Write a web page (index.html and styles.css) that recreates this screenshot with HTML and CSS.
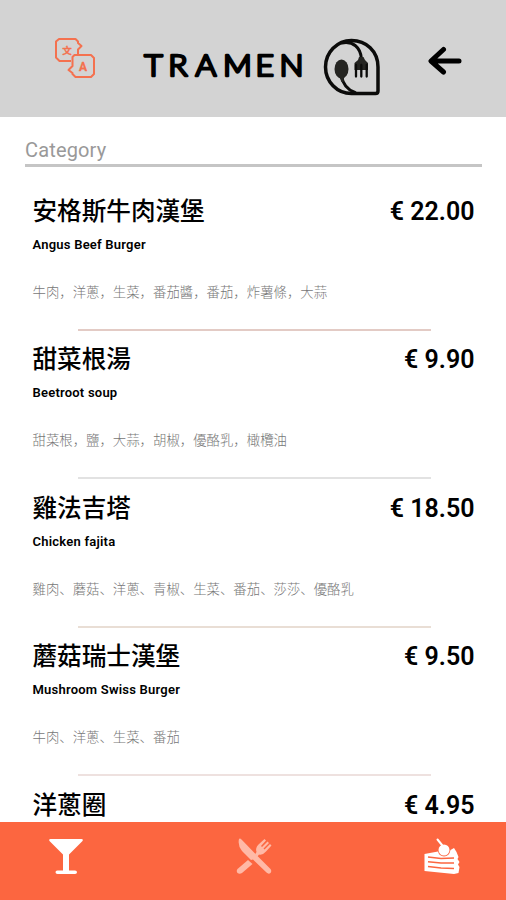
FILE: index.html
```html
<!DOCTYPE html>
<html lang="zh">
<head>
<meta charset="utf-8">
<title>Tramen</title>
<link rel="stylesheet" href="styles.css">
</head>
<body>
<div class="app">
  <header class="header">
    <svg class="translate" viewBox="0 0 42 42" fill="none" stroke="#f4714f" stroke-width="2" stroke-linejoin="round">
      <path d="M17 24H5.500L2 20.500V4.500L5 2H21.500L24 4.500V6L27.500 9L24 12.500V17"/>
      <path d="M20.500 18H37L40 21V37L37 40H21.500L18.500 37V36L14.500 33L18.500 29V20Z"/>
      <text class="glyph-zh" x="13" y="17">文</text>
      <text class="glyph-a" x="29" y="34">A</text>
    </svg>
    <svg class="wordmark" viewBox="0 0 170 40">
      <text transform="scale(1.06 1)" x="5 27.500 53.300 79.200 109.800 132.600" y="30.500">TRAMEN</text>
    </svg>
    <svg class="emblem" viewBox="0 0 58 58" fill="none" stroke="#0b0b0a" stroke-linecap="round" stroke-linejoin="round">
      <path stroke-width="3.500" d="M28.500 2.500C43 2.500 55 13 55 29V53Q55 55.500 52.500 55.500H28.500C14 55.500 2.500 43.500 2.500 29S14 2.500 28.500 2.500Z"/>
      <path stroke-width="3" d="M19 5C30 3 37.500 9 38.500 21M18.500 38C20 47 25 52 32 54.500"/>
      <ellipse cx="18.500" cy="31" rx="7" ry="9.500" fill="#242421" stroke="none"/>
      <path d="M15.500 37H21.500L20.500 44H18.500Z" fill="#242421" stroke="none"/>
      <path d="M36 19H40.500L42 22L45 25V32H31.500V25L35 22Z" fill="#242421" stroke="none"/>
      <path stroke-width="2.300" d="M33 27V38.500M38.300 27V38.500M43.700 27V38.500"/>
    </svg>
    <svg class="back" viewBox="0 0 36 30" fill="none" stroke="#000" stroke-width="5" stroke-linecap="round" stroke-linejoin="round">
      <path d="M16.500 3.500L4 15L16.500 26M5 15H32"/>
    </svg>
  </header>

  <main class="menu">
    <div class="category">Category</div>
    <section class="item">
      <div class="row"><h2>安格斯牛肉漢堡</h2><span class="price">€ 22.00</span></div>
      <p class="name">Angus Beef Burger</p>
      <p class="ingredients">牛肉，洋蔥，生菜，番茄醬，番茄，炸薯條，大蒜</p>
      <hr class="rule rose">
    </section>
    <section class="item">
      <div class="row"><h2>甜菜根湯</h2><span class="price">€ 9.90</span></div>
      <p class="name">Beetroot soup</p>
      <p class="ingredients">甜菜根，鹽，大蒜，胡椒，優酪乳，橄欖油</p>
      <hr class="rule grey">
    </section>
    <section class="item">
      <div class="row"><h2>雞法吉塔</h2><span class="price">€ 18.50</span></div>
      <p class="name">Chicken fajita</p>
      <p class="ingredients">雞肉、蘑菇、洋蔥、青椒、生菜、番茄、莎莎、優酪乳</p>
      <hr class="rule sand">
    </section>
    <section class="item">
      <div class="row"><h2>蘑菇瑞士漢堡</h2><span class="price">€ 9.50</span></div>
      <p class="name">Mushroom Swiss Burger</p>
      <p class="ingredients">牛肉、洋蔥、生菜、番茄</p>
      <hr class="rule blush">
    </section>
    <section class="item">
      <div class="row"><h2>洋蔥圈</h2><span class="price">€ 4.95</span></div>
    </section>
  </main>

  <nav class="tabs">
    <svg class="tab" viewBox="0 0 36 36" fill="#fff">
      <path d="M2.500 1H33.500Q35.500 1 34.500 3L21 16.500V32.500H27Q29 32.500 29 34.200T27 36H9.500Q7.500 36 7.500 34.200T9.500 32.500H15V16.500L1.500 3Q.5 1 2.500 1Z"/>
    </svg>
    <svg class="tab active" viewBox="0 0 36 36" fill="#ffb9a6">
      <path d="M3 1Q4 0 5.500 1.500L20 16.500L34.500 31Q36 33 34.500 35Q32.500 36.500 30.500 34.500L17 21.500L15 22L6 13Q1.500 7.500 3 1Z"/>
      <path d="M12 22L16.500 26L6 35Q3.500 36.500 1.500 35Q0 33 1.500 31Z"/>
      <path d="M19 16.500L20.500 14Q19 10 22.500 6.500L28.500 1L30 2.500L25 8L26 9L31.500 3.500L33 5L27.500 10.500L28.500 11.500L34 6L35.500 7.500L30 13.500Q26.500 17.500 23 16.500L21.500 18.500Z"/>
    </svg>
    <svg class="tab" viewBox="0 0 36 36">
      <path fill="#fff" d="M.5 16L14 13.500Q15 18 20 18.500Q25.500 18 26.500 12L30 10L32.500 14L34.500 19L33.500 21L35.500 24L34 26.500L35.500 29L34.500 35L30 36L.5 33Z"/>
      <circle cx="20" cy="12" r="5.500" fill="#fff"/>
      <path fill="none" stroke="#fff" stroke-width="2" stroke-linecap="round" d="M13.500 1.500L18 7"/>
      <path fill="none" stroke="#fc6640" stroke-width="1.400" d="M4 19L17 20.500L30 20M4 23.800L17 25L30 25M4 28.500L17 30L30 30.500"/>
    </svg>
  </nav>
</div>
</body>
</html>
```

FILE: styles.css
```css
* {
  box-sizing: border-box;
}

body {
  margin: 0;
  background: #fff;
  color: #000;
  font-family: Roboto, "Noto Sans CJK SC", sans-serif;
}

.app {
  display: flex;
  flex-direction: column;
  width: 506px;
  height: 900px;
  overflow: hidden;
}

.header {
  display: flex;
  align-items: flex-start;
  flex: 0 0 116.5px;
  padding: 37px 43px 0 54px;
  background: #d3d3d3;
}

.translate {
  width: 42px;
  height: 42px;
}

.translate text {
  fill: #f4714f;
  stroke-width: 0.3;
  text-anchor: middle;
}

.glyph-zh {
  font: 700 9.5px "Noto Sans CJK SC", sans-serif;
}

.glyph-a {
  font: 700 12px Roboto, sans-serif;
}

.wordmark {
  width: 170px;
  height: 40px;
  margin: 9px 0 0 43px;
}

.wordmark text {
  font: 300 30px Lato, sans-serif;
  stroke: #000;
  stroke-width: 2.7;
  stroke-linejoin: round;
}

.emblem {
  width: 58px;
  height: 58px;
  margin: 1px 0 0 14px;
}

.back {
  width: 36px;
  height: 30px;
  margin: 9px 0 0 auto;
}

.menu {
  flex: 1;
  min-height: 0;
  overflow: hidden;
}

.category {
  height: 50px;
  margin: 0 24px 27px 25px;
  padding-top: 20.5px;
  border-bottom: 3px solid #c5c5c5;
  color: #999;
  font-size: 20px;
  line-height: 26px;
  letter-spacing: 0.15px;
}

.item {
  height: 148.5px;
  padding: 0 31.5px 0 32.5px;
}

.row {
  display: flex;
  align-items: center;
  justify-content: space-between;
  height: 36px;
}

h2 {
  margin: 0;
  font-size: 24.6px;
  font-weight: 500;
  line-height: 36px;
}

.price {
  font-size: 25px;
  font-weight: 600;
  line-height: 36px;
}

.name {
  margin: 7px 0 32px;
  font-size: 13px;
  font-weight: 600;
  line-height: 16px;
  letter-spacing: 0.22px;
}

.ingredients {
  margin: 0;
  color: #777;
  font-size: 13.4px;
  font-weight: 300;
  line-height: 16px;
}

.rule {
  width: 353px;
  height: 2px;
  margin: 28px 0 0 45px;
  border: 0;
}

.rose {
  background: #e3cbc5;
}

.grey {
  background: #e2e2e2;
}

.sand {
  background: #e9ded5;
}

.blush {
  background: #eee1df;
}

.tabs {
  display: flex;
  justify-content: space-between;
  flex: 0 0 78px;
  padding: 16px 46px 0 48px;
  background: #fc6640;
}

.tab {
  width: 36px;
  height: 36px;
}
```
